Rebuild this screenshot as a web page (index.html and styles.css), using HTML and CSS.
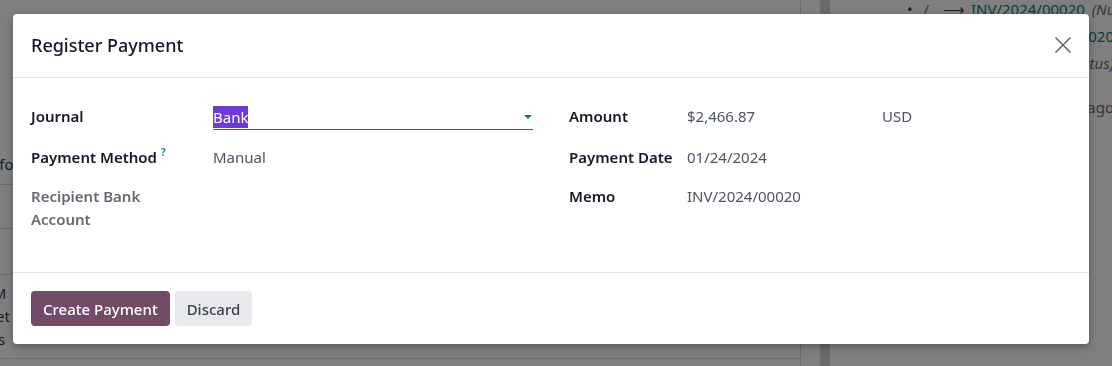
FILE: index.html
```html
<!DOCTYPE html>
<html lang="en">
<head>
    <meta charset="UTF-8">
    <meta name="viewport" content="width=device-width, initial-scale=1.0">
    <title>Register Payment</title>
    <link rel="stylesheet" href="styles.css">
</head>

<body>
<div class="page">
    <div class="sheet">
        <div class="block b1"><span class="cut">Info</span></div>
        <div class="block b2"></div>
        <div class="block b3"></div>
        <div class="block b4">
            <div class="cut">LM</div>
            <div class="cut">Get</div>
            <div class="cut tiny">s</div>
        </div>
    </div>
    <div class="gutter"></div>
    <div class="strip"></div>
    <div class="chatter">
        <div class="line first">
            <span class="dot">•</span>
            <span class="muted">/</span>
            <span class="arrow">⟶</span>
            <span class="link">INV/2024/00020</span>
            <i class="muted">(Number)</i>
        </div>
        <div class="line tail"><span class="link">INV/2024/00020</span></div>
        <div class="line tail"><i class="muted">(Status)</i></div>
        <div class="line tail gap"><span class="muted">2 minutes ago</span></div>
    </div>
</div>

<div class="backdrop">
    <div class="modal">
        <header class="modal-header">
            <h4>Register Payment</h4>
            <button class="close" type="button" aria-label="Close">
                <svg width="18" height="18" viewBox="0 0 18 18">
                    <path d="M1.5 1.5 L16.5 16.5 M16.5 1.5 L1.5 16.5" stroke="#6b6b6b" stroke-width="1.6" fill="none"/>
                </svg>
            </button>
        </header>

        <div class="modal-body">
            <div class="group group-left">
                <label class="lbl">Journal</label>
                <div class="val">
                    <div class="select">
                        <span class="selected">Bank</span>
                        <span class="caret"></span>
                    </div>
                </div>

                <label class="lbl">Payment Method <sup>?</sup></label>
                <div class="val">Manual</div>

                <label class="lbl dim">Recipient Bank Account</label>
                <div class="val"></div>
            </div>

            <div class="group group-right">
                <label class="lbl">Amount</label>
                <div class="val amount">
                    <span class="sum">$2,466.87</span>
                    <span>USD</span>
                </div>

                <label class="lbl">Payment Date</label>
                <div class="val">01/24/2024</div>

                <label class="lbl">Memo</label>
                <div class="val">INV/2024/00020</div>
            </div>
        </div>

        <footer class="modal-footer">
            <button class="btn btn-primary" type="button">Create Payment</button>
            <button class="btn btn-secondary" type="button">Discard</button>
        </footer>
    </div>
</div>
</body>
</html>
```

FILE: styles.css
```css
* {
    margin: 0;
    padding: 0;
    box-sizing: border-box;
    font-family: "Noto Sans", "Open Sans", sans-serif;
}

body {
    width: 1112px;
    height: 366px;
    overflow: hidden;
    background: #fff;
    font-size: 15px;
    color: #374151;
}

/* page behind the dialog */

.page {
    display: flex;
    height: 366px;
}

.sheet {
    width: 801px;
    border-right: 1px solid #d6d8db;
    display: flex;
    flex-direction: column;
}

.sheet .block {
    border-bottom: 1px solid #d6d8db;
    flex-shrink: 0;
}

.sheet .b1 {
    height: 185px;
    padding-top: 154px;
}

.sheet .b2 {
    height: 44px;
}

.sheet .b3 {
    height: 46px;
}

.sheet .b4 {
    height: 84px;
    padding-top: 7px;
    line-height: 23px;
}

.sheet .cut {
    display: block;
    text-indent: -15px;
    color: #374151;
    white-space: nowrap;
}

.sheet .cut.tiny {
    text-indent: -2px;
}

.gutter {
    width: 19px;
}

.strip {
    width: 10px;
    background: #d2d2d2;
}

.chatter {
    flex: 1;
    padding-left: 77px;
    margin-top: -4px;
    line-height: 27px;
    white-space: nowrap;
    overflow: hidden;
}

.chatter .line.tail {
    text-align: right;
    margin-right: -2px;
}

.chatter .line.gap {
    margin-top: 17px;
}

.chatter .dot {
    margin-right: 7px;
}

.chatter .muted {
    color: #6b7280;
}

.chatter .arrow {
    margin: 0 2px 0 10px;
}

.chatter .link {
    color: #017e84;
}

.chatter .first i {
    margin-left: 3px;
}

/* dialog */

.backdrop {
    position: fixed;
    inset: 0;
    background: rgba(0, 0, 0, 0.5);
    padding: 14px 0 0 13px;
}

.modal {
    width: 1076px;
    height: 330px;
    background: #fff;
    border-radius: 4px;
    display: flex;
    flex-direction: column;
    box-shadow: 0 3px 8px rgba(0, 0, 0, 0.3);
}

.modal-header {
    height: 64px;
    flex-shrink: 0;
    display: flex;
    align-items: center;
    justify-content: space-between;
    padding: 0 17px 1px 18px;
    border-bottom: 1px solid #dee2e6;
}

.modal-header h4 {
    font-size: 18px;
    font-weight: 500;
    color: #111827;
}

.modal-header .close {
    border: none;
    background: none;
    display: flex;
    cursor: pointer;
}

.modal-body {
    flex: 1;
    display: flex;
    gap: 36px;
    padding: 26px 18px 0;
    border-bottom: 1px solid #dee2e6;
}

.group {
    display: grid;
    row-gap: 14px;
    align-content: start;
}

.group-left {
    grid-template-columns: 182px 320px;
}

.group-right {
    grid-template-columns: 118px 384px;
}

.lbl,
.val {
    line-height: 23px;
    padding: 1px 0;
    min-height: 25px;
}

.lbl {
    font-weight: 600;
    color: #111827;
    max-width: 150px;
}

.lbl.dim {
    color: #656a72;
}

.lbl sup {
    font-size: 10px;
    color: #017e84;
    vertical-align: top;
    position: relative;
    top: -5px;
}

.val {
    color: #4b5563;
}

.select {
    display: flex;
    align-items: center;
    justify-content: space-between;
    height: 26px;
    margin-top: -1px;
    border-bottom: 1px solid #017e84;
}

.select .selected {
    background: #6d3ad7;
    color: #fff;
    line-height: 22px;
}

.select .caret {
    width: 0;
    height: 0;
    border-left: 4px solid transparent;
    border-right: 4px solid transparent;
    border-top: 4px solid #017e84;
    margin-right: 1px;
}

.amount {
    display: flex;
    min-height: 27px;
}

.amount .sum {
    width: 195px;
}

.modal-footer {
    height: 71px;
    flex-shrink: 0;
    display: flex;
    align-items: center;
    gap: 5px;
    padding: 0 18px;
}

.btn {
    height: 35px;
    padding: 0 12px;
    border: none;
    border-radius: 4px;
    font-size: 15px;
    font-weight: 500;
    cursor: pointer;
}

.btn-primary {
    background: #714b67;
    color: #fff;
}

.btn-secondary {
    background: #e7e9ed;
    color: #374151;
}
```
